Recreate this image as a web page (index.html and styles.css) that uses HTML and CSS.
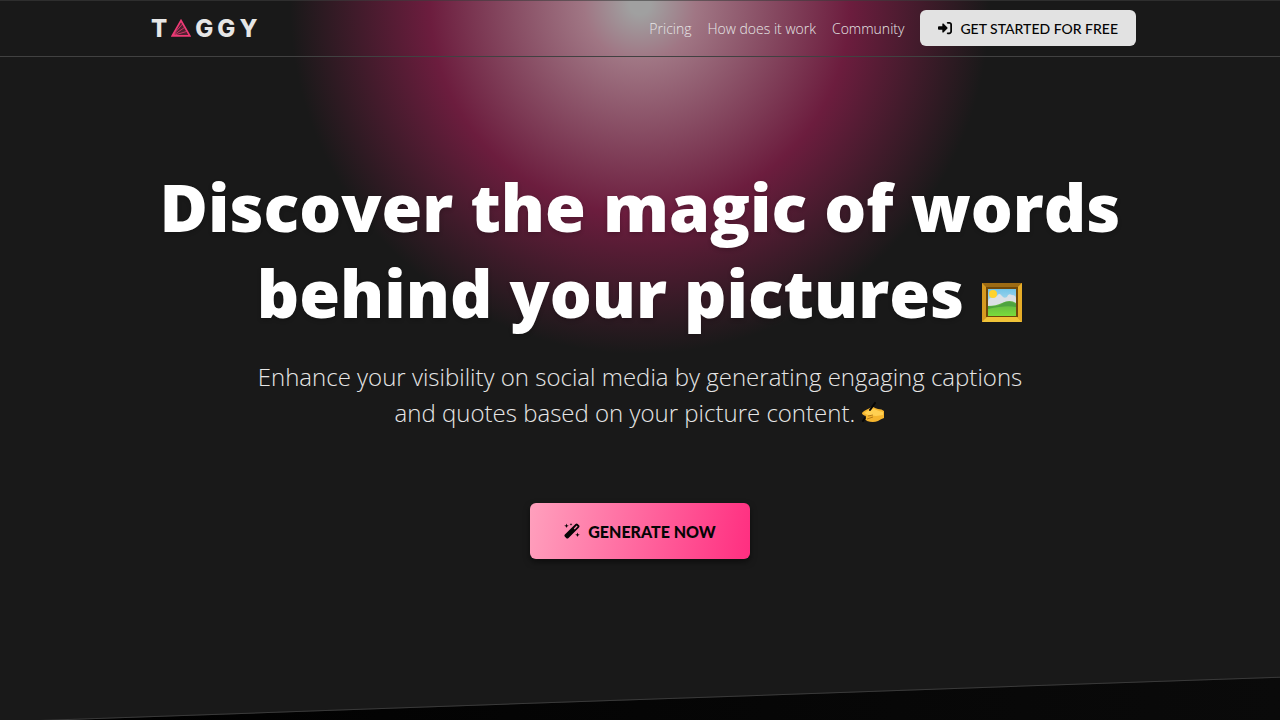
FILE: index.html
```html
<!DOCTYPE html>
<html lang="en">
<head>
    <meta charset="UTF-8">
    <meta name="viewport" content="width=device-width, initial-scale=1.0">
    <title>Taggy</title>
    <link rel="stylesheet" href="styles.css">
</head>
<body>

<div class="page">
<header class="navbar">
    <div class="container">
        <a href="#" class="logo" aria-label="Taggy">
            <span>T</span>
            <svg width="20" height="18" viewBox="0 0 20 18" fill="none" stroke="#ed3a75">
                <path fill="#ed3a75" fill-opacity=".25" d="M10 1.500 18.800 16.800H1.200Z" stroke-width="1.700"/>
                <path d="M2 16 11.500 5M2 16.500 13.500 8.500M2 16.500 15.500 12.500" stroke-width=".8"/>
            </svg>
            <span>G</span>
            <span>G</span>
            <span>Y</span>
        </a>
        <nav>
            <a href="#pricing">Pricing</a>
            <a href="#how">How does it work</a>
            <a href="#community">Community</a>
            <button class="btn-start">
                <svg width="14" height="14" viewBox="0 0 512 512" fill="currentColor">
                    <path d="M352 96h64c18 0 32 14 32 32v256c0 18-14 32-32 32h-64c-18 0-32 14-32 32s14 32 32 32h64c53 0 96-43 96-96V128c0-53-43-96-96-96h-64c-18 0-32 14-32 32s14 32 32 32zm-9 178c5-5 7-11 7-18s-2-13-7-18L199 94c-7-7-17-9-26-5s-15 12-15 23v80H32c-18 0-32 14-32 32v64c0 18 14 32 32 32h126v80c0 10 6 19 15 23s19 2 26-5z"/>
                </svg>
                GET STARTED FOR FREE
            </button>
        </nav>
    </div>
</header>

<main class="hero">
    <h1>
        Discover the magic of words<br>
        behind your pictures
        <svg class="frame" width="42" height="42" viewBox="0 0 42 42">
            <defs>
                <linearGradient id="sky" x2="0" y2="1">
                    <stop offset="0" stop-color="#72c4e8"/>
                    <stop offset="1" stop-color="#e3eff2"/>
                </linearGradient>
                <linearGradient id="grass" x2="0" y2="1">
                    <stop offset="0" stop-color="#5fae45"/>
                    <stop offset="1" stop-color="#7bdc3b"/>
                </linearGradient>
            </defs>
            <path fill="#d79a20" d="M1 2h40v39H1z"/>
            <path fill="#9d6b13" d="M1 2h40l-5 5H6z"/>
            <path fill="#f0c338" d="M1 41h40l-5-5H6z"/>
            <path fill="#e6ac28" d="M41 2v39l-5-5V7z"/>
            <path fill="#704808" d="M5 6h32v30H5z"/>
            <path fill="url(#sky)" d="M7 8h28v27H7z"/>
            <path fill="#dce0e5" d="M7 21q1-5 5-4 1-4 4-2 2-4 5 0 2 3 5 1 1-4 5-2 4 0 4 4v7H7z"/>
            <circle cx="12" cy="13" r="4" fill="#ffd32d"/>
            <path fill="url(#grass)" d="M7 25q8 0 14-3 8-4 14 0v13H7z"/>
            <path fill="#4fa33f" d="M7 25q10 1 15-3 6-3 13 1v3q-11-2-28 2z"/>
        </svg>
    </h1>
    <p>
        Enhance your visibility on social media by generating engaging captions<br>
        and quotes based on your picture content.
        <svg class="hand" width="24" height="22" viewBox="0 0 24 22">
            <path fill="#f5b52e" d="M1 11q1-2 8-5 3-2 5 0l3 1q4 0 6 2v7q-3 1-6 3-5 2-11 0l-2-2 1-3q-4-1-4-3z"/>
            <path fill="#ffd052" d="M3 11q6-4 10-4l5 2 4 1v3l-7 1-8-1z"/>
            <path fill="none" stroke="#a66c12" stroke-width=".8" d="m7 14 5-1M6 17l6-2"/>
            <path fill="none" stroke="#050505" stroke-width="2" stroke-linecap="round" d="M14 1 9 8M4 16l-2 3"/>
        </svg>
    </p>
    <button class="btn-generate">
        <svg width="16" height="16" viewBox="0 0 16 16" fill="currentColor">
            <path fill-rule="evenodd" d="M11.500 1q1.200-1 2.200 0L15 2.300q1 1 0 2.200L4.500 15q-1.200 1-2.300 0L.9 13.700q-1-1.100 0-2.300zM12.700 2.600 9.800 5.500l.9.900 2.900-2.900z"/>
            <path d="m2.500.5.6 1.700 1.700.6-1.700.6-.6 1.700-.6-1.700-1.700-.6 1.700-.6zM7 0l.4 1 1 .4-1 .4L7 2.800l-.4-1-1-.4 1-.4zM13.500 9.500l.6 1.700 1.700.6-1.700.6-.6 1.700-.6-1.700-1.700-.6 1.700-.6z"/>
        </svg>
        GENERATE NOW
    </button>
</main>

<section class="slope"></section>
</div>

</body>
</html>
```
FILE: styles.css
```css
* {
    box-sizing: border-box;
}
body {
    margin: 0;
    font-family: "Open Sans", sans-serif;
    color: #ffffff;
    background-color: #191919;
}
.page {
    position: relative;
    min-height: 100vh;
    display: flex;
    flex-direction: column;
    overflow: hidden;
    background: radial-gradient(circle 350px at 50% 4px, #a0a0a0 3%, #a07684 16%, #6c1d3e 60%, #191919 100%);
}
.navbar {
    border-bottom: 1px solid #414141;
    box-shadow: inset 0 1px rgba(60, 60, 60, 0.6);
}
.container {
    height: 56px;
    max-width: 1024px;
    margin: 0 auto;
    padding: 0 16px;
    display: flex;
    justify-content: space-between;
    align-items: center;
}
.logo {
    display: flex;
    align-items: center;
    gap: 4px;
    padding-left: 7px;
    font-family: Inter, sans-serif;
    font-size: 24px;
    font-weight: 800;
    color: #e6e6e6;
    text-decoration: none;
}
nav {
    display: flex;
    align-items: center;
    gap: 16px;
}
nav a {
    font-size: 14px;
    font-weight: 300;
    color: #e6e6e6;
    text-decoration: none;
}
button {
    display: flex;
    align-items: center;
    justify-content: center;
    gap: 8px;
    border: none;
    border-radius: 6px;
    font-family: Lato, sans-serif;
    color: #050505;
    cursor: pointer;
}
.btn-start {
    height: 36px;
    padding: 0 18px;
    background-color: #e2e2e2;
    font-size: 14px;
    font-weight: 500;
}
.hero {
    flex: 1;
    display: flex;
    flex-direction: column;
    align-items: center;
    padding: 106px 16px 0;
    text-align: center;
}
h1 {
    margin: 0;
    font-size: 66px;
    font-weight: 800;
    line-height: 86px;
    text-shadow: 0 2px 4px rgba(0, 0, 0, 0.2);
}
.frame {
    vertical-align: -5px;
}
.hero p {
    margin: 24px 0 72px;
    font-size: 24px;
    font-weight: 300;
    line-height: 36px;
    color: #e6e6e6;
}
.hand {
    vertical-align: -2px;
}
.btn-generate {
    height: 56px;
    padding: 0 34px;
    background: linear-gradient(100deg, #ffa0bd, #ff2e80);
    box-shadow: 0 3px 6px rgba(0, 0, 0, 0.5);
    font-size: 16px;
    font-weight: 900;
}
.slope {
    position: relative;
    height: 21px;
}
.slope::before {
    content: "";
    position: absolute;
    top: 0;
    left: 0;
    width: 100%;
    height: 100px;
    border-top: 1px solid #3a3a3a;
    background: linear-gradient(90deg, #000000, #0a0a0a);
    transform: skewY(-2deg);
    transform-origin: top center;
}
```
